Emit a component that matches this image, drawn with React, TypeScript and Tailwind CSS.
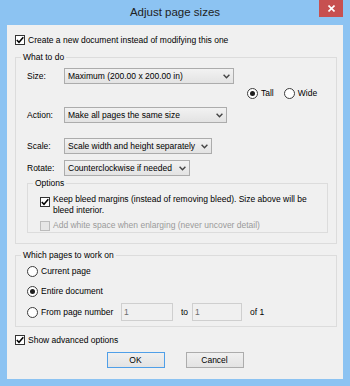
import React from "react";

function Check({ checked = false, disabled = false }: { checked?: boolean; disabled?: boolean }) {
  return (
    <span
      className={`flex h-[10px] w-[10px] shrink-0 items-center justify-center border ${
        disabled ? "border-[#bcbcbc] bg-[#e6e6e6]" : "border-[#333333] bg-white"
      }`}
    >
      {checked && (
        <svg width="8" height="8" viewBox="0 0 8 8" fill="none">
          <path d="M0.8 3.9 L3 6.3 L7.3 1.2" stroke="#000" strokeWidth="1.5" />
        </svg>
      )}
    </span>
  );
}

function Radio({ on = false }: { on?: boolean }) {
  return (
    <span className="flex h-[11px] w-[11px] shrink-0 items-center justify-center rounded-full border border-[#3c3c3c] bg-white">
      {on && <span className="h-[5px] w-[5px] rounded-full bg-[#1e1e1e]" />}
    </span>
  );
}

function Select({ value, className }: { value: string; className: string }) {
  return (
    <div
      className={`flex h-[16px] items-center justify-between border border-[#acacac] bg-gradient-to-b from-[#f2f2f2] to-[#e3e3e3] pl-[3px] pr-[3px] ${className}`}
    >
      <span className="whitespace-nowrap">{value}</span>
      <svg width="7" height="5" viewBox="0 0 7 5" fill="none">
        <path d="M0.6 0.8 L3.5 3.8 L6.4 0.8" stroke="#444" strokeWidth="1.4" />
      </svg>
    </div>
  );
}

function Row({ label, children }: { label: string; children: React.ReactNode }) {
  return (
    <div className="flex items-center">
      <span className="w-[37px]">{label}</span>
      {children}
    </div>
  );
}

export default function App() {
  return (
    <div className="flex h-[386px] w-[350px] flex-col bg-[#8cc3f2] font-['Liberation_Sans',Arial,sans-serif] text-[8.5px] leading-[11px] text-black">
      {/* title bar */}
      <div className="relative flex h-[25px] shrink-0 items-center justify-center">
        <span className="-mt-[1px] text-[11.5px] leading-[14px] text-[#222]">Adjust page sizes</span>
        <div className="absolute right-[7px] top-0 flex h-[17px] w-[24px] items-center justify-center bg-[#c75050]">
          <svg width="7" height="7" viewBox="0 0 7 7" fill="none">
            <path d="M0.5 0.5 L6.5 6.5 M6.5 0.5 L0.5 6.5" stroke="#fff" strokeWidth="1.6" />
          </svg>
        </div>
      </div>

      {/* client area */}
      <div className="mx-[7px] flex h-[354px] flex-col bg-[#f0f0f0] pt-[8px]">
        <div className="ml-[8px] flex h-[14px] items-center gap-[3px]">
          <Check checked />
          <span>Create a new document instead of modifying this one</span>
        </div>

        <fieldset className="m-0 ml-[8px] mt-[5px] w-[322px] min-w-0 border border-[#dcdcdc] p-0">
          <legend className="ml-[5px] px-[2px]">What to do</legend>
          <div className="pb-[10px] pl-[11px] pt-[5px]">
            <Row label="Size:">
              <Select value="Maximum (200.00 x 200.00 in)" className="w-[170px]" />
            </Row>
            <div className="ml-[220px] mt-[3px] flex h-[12px] items-center">
              <Radio on />
              <span className="ml-[3px]">Tall</span>
              <span className="ml-[10px]">
                <Radio />
              </span>
              <span className="ml-[3px]">Wide</span>
            </div>
            <div className="mt-[8px]">
              <Row label="Action:">
                <Select value="Make all pages the same size" className="w-[163px]" />
              </Row>
            </div>
            <div className="mt-[15px]">
              <Row label="Scale:">
                <Select value="Scale width and height separately" className="w-[148px]" />
              </Row>
            </div>
            <div className="mt-[6px]">
              <Row label="Rotate:">
                <Select value="Counterclockwise if needed" className="w-[126px]" />
              </Row>
            </div>

            <fieldset className="m-0 mt-[2px] w-[301px] min-w-0 border border-[#dcdcdc] p-0">
              <legend className="ml-[5px] px-[2px]">Options</legend>
              <div className="pb-[1px] pl-[12px] pt-[5px]">
                <div className="flex items-start">
                  <span className="mt-[3px]">
                    <Check checked />
                  </span>
                  <span className="ml-[3px] w-[262px]">
                    Keep bleed margins (instead of removing bleed). Size above will be bleed interior.
                  </span>
                </div>
                <div className="mt-[4px] flex h-[11px] items-center">
                  <Check disabled />
                  <span className="ml-[3px] text-[#9a9a9a]">
                    Add white space when enlarging (never uncover detail)
                  </span>
                </div>
              </div>
            </fieldset>
          </div>
        </fieldset>

        <fieldset className="m-0 ml-[8px] mt-[6px] w-[322px] min-w-0 border border-[#dcdcdc] p-0">
          <legend className="ml-[5px] px-[2px]">Which pages to work on</legend>
          <div className="pb-[5px] pl-[11px] pt-[4px]">
            <div className="flex h-[12px] items-center">
              <Radio />
              <span className="ml-[3px]">Current page</span>
            </div>
            <div className="mt-[8px] flex h-[12px] items-center">
              <Radio on />
              <span className="ml-[3px]">Entire document</span>
            </div>
            <div className="mt-[6px] flex h-[18px] items-center">
              <div className="flex w-[94px] items-center">
                <Radio />
                <span className="ml-[3px]">From page number</span>
              </div>
              <div className="flex h-[18px] w-[52px] items-center border border-[#cfcfcf] bg-[#f0f0f0] pl-[2px] text-[#6d6d6d]">
                1
              </div>
              <span className="w-[19px] pl-[8px]">to</span>
              <div className="flex h-[18px] w-[50px] items-center border border-[#cfcfcf] bg-[#f0f0f0] pl-[2px] text-[#6d6d6d]">
                1
              </div>
              <span className="ml-[8px]">of 1</span>
            </div>
          </div>
        </fieldset>

        <div className="ml-[8px] mt-[7px] flex h-[12px] items-center gap-[3px]">
          <Check checked />
          <span>Show advanced options</span>
        </div>

        <div className="mt-[6px] flex justify-center gap-[21px]">
          <button className="flex h-[16px] w-[58px] items-center justify-center border border-[#4f9fe8] bg-gradient-to-b from-[#f0f0f0] to-[#e3e3e3]">
            OK
          </button>
          <button className="flex h-[16px] w-[58px] items-center justify-center border border-[#acacac] bg-gradient-to-b from-[#f0f0f0] to-[#e3e3e3]">
            Cancel
          </button>
        </div>
      </div>
    </div>
  );
}
